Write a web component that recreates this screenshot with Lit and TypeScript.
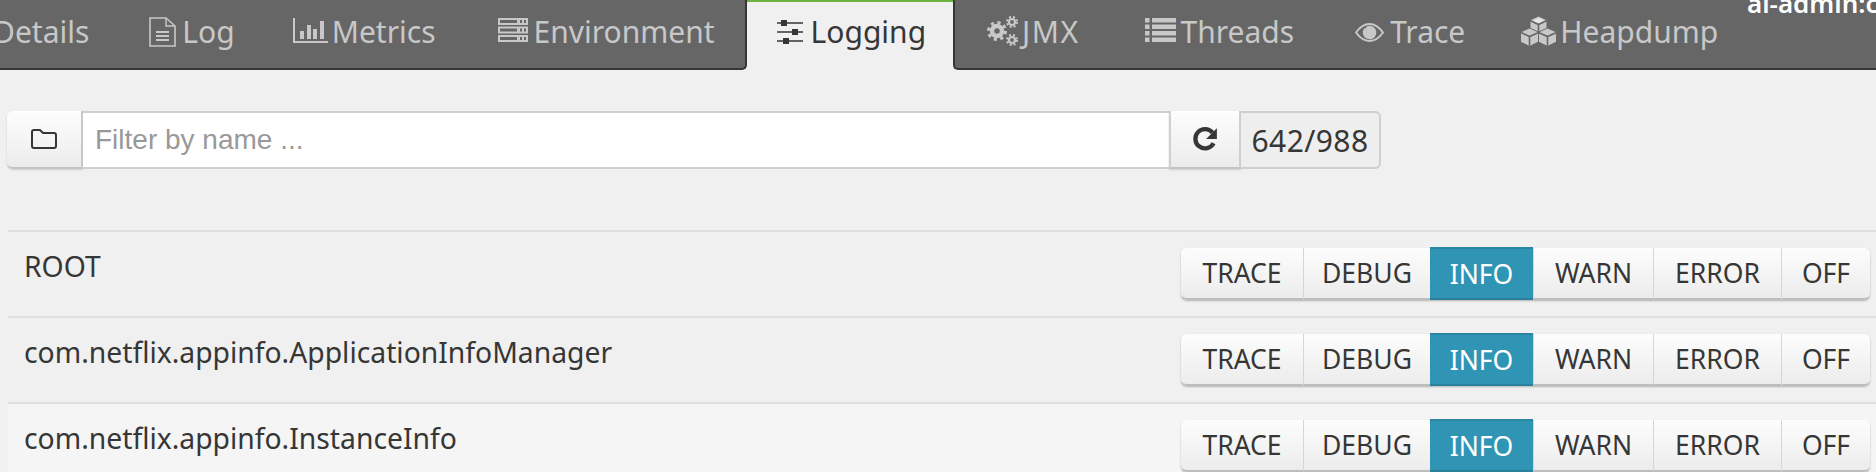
import { LitElement, css, html, svg } from "lit";
import { customElement, property } from "lit/decorators.js";
import { classMap } from "lit/directives/class-map.js";

const icons: Record<string, unknown> = {
  log: svg`<path d="M1 3h16l9 8v20H1z" fill="none" stroke="currentColor" stroke-width="1.6"/><path d="M17 3v8h9" fill="none" stroke="currentColor" stroke-width="1.4"/><path d="M7 17h13M7 21h13M7 25h13" stroke="currentColor" stroke-width="1.8"/>`,
  metrics: svg`<path d="M1 3v24h34" fill="none" stroke="currentColor" stroke-width="2"/><path d="M7 16h4v8H7zM14 10h4v14h-4zM20 14h4v10h-4zM27 6h4v18h-4z" fill="currentColor"/>`,
  env: svg`<path fill-rule="evenodd" fill="currentColor" d="M0 3h30v7H0zM22 5v3h2V5zM26 5v3h2V5zM2 5v3h17V5zM0 11.5h30v7H0zM22 13.5v3h2v-3zM26 13.5v3h2v-3zM2 13.5v3h17v-3zM0 20h30v7H0zM22 22v3h2v-3zM26 22v3h2v-3zM2 22v3h17v-3z"/>`,
  sliders: svg`<path d="M0 8h26M0 17h26M0 26h26" stroke="currentColor" stroke-width="1.6"/><path d="M4 5h6v6H4zM15 14h6v6h-6zM6 23h6v6H6z" fill="currentColor"/>`,
  jmx: svg`<g fill="none" stroke="currentColor"><circle cx="10" cy="16" r="5" stroke-width="4.5"/><circle cx="10" cy="16" r="8.5" stroke-width="3" stroke-dasharray="3.2 3.5"/><circle cx="25" cy="7" r="3" stroke-width="2.2"/><circle cx="25" cy="7" r="5" stroke-width="2" stroke-dasharray="2 2"/><circle cx="25" cy="25" r="3" stroke-width="2.2"/><circle cx="25" cy="25" r="5" stroke-width="2" stroke-dasharray="2 2"/></g>`,
  list: svg`<path fill="currentColor" d="M0 3h4.500v4.500H0zM7 3h24v4.500H7zM0 9.500h4.500V14H0zM7 9.500h24V14H7zM0 16h4.500v4.500H0zM7 16h24v4.500H7zM0 22.500h4.500V27H0zM7 22.500h24V27H7z"/>`,
  eye: svg`<path d="M1 17.500c4-5.500 8.500-8.500 13.500-8.500S24 12 28 17.500C24 23 19.500 26 14.500 26S5 23 1 17.500z" fill="none" stroke="currentColor" stroke-width="2"/><path d="M9.500 13a6.800 6.800 0 1 0 5-2.300c-2 0-3.500.8-3.500 2.500 0 1.300 1 2.300 2.300 2.300.9 0 1.700-.5 2-1.200z" fill="currentColor"/>`,
  cubes: svg`<g fill="currentColor" stroke="#666" stroke-width="1"><path d="M18.500 1l8.500 4v10l-8.500 4-8.500-4V5z"/><path d="M9.500 13l9 4v10l-9 4.500L.5 27V17z"/><path d="M27.500 13l9 4v10l-9 4.500-9-4.500V17z"/></g><path d="M10 5.500l8.500 4 8.500-4M18.500 9.500V17M1 17.500l8.500 4 9-4M9.500 21.500V31M18.500 17.500l9 4 9-4M27.500 21.500V31" fill="none" stroke="#666" stroke-width="1.6"/><path d="M13 5.500l5.500-2.500 5.500 2.500-5.500 2.500z" fill="#e6e6e6"/>`,
};

const tabs = [
  { label: "Details", icon: "", w: 0, gap: 0, nudge: 0, spacing: 0 },
  { label: "Log", icon: "log", w: 27, gap: 6, nudge: 0, spacing: 0 },
  { label: "Metrics", icon: "metrics", w: 35, gap: 4, nudge: -2, spacing: 0 },
  { label: "Environment", icon: "env", w: 30, gap: 6, nudge: 2, spacing: 0 },
  { label: "Logging", icon: "sliders", w: 26, gap: 8, nudge: 0, spacing: 0 },
  { label: "JMX", icon: "jmx", w: 32, gap: 3, nudge: 2, spacing: 1.5 },
  { label: "Threads", icon: "list", w: 31, gap: 5, nudge: 5, spacing: 0 },
  { label: "Trace", icon: "eye", w: 29, gap: 6, nudge: 1, spacing: 0 },
  { label: "Heapdump", icon: "cubes", w: 37, gap: 3, nudge: -5, spacing: 0 },
];

const levels = ["TRACE", "DEBUG", "INFO", "WARN", "ERROR", "OFF"];
const loggers = ["ROOT", "com.netflix.appinfo.ApplicationInfoManager", "com.netflix.appinfo.InstanceInfo"];

@customElement("logger-row")
export class LoggerRow extends LitElement {
  @property() name = "";
  @property({ type: Boolean }) striped = false;

  static styles = css`
    :host {
      display: block;
    }
    .row {
      display: flex;
      justify-content: space-between;
      height: 84px;
      border-top: 2px solid #dfdfdf;
      padding: 0 6px 0 16px;
    }
    .row.striped {
      background: #f5f5f5;
    }
    .name {
      font-size: 28.300px;
      line-height: 36px;
      padding-top: 16px;
      color: #363636;
    }
    .levels {
      display: grid;
      grid-template-columns: 122px 127px 103px 120px 128px 89px;
      height: 52px;
      margin-top: 16px;
      border-radius: 6px;
      box-shadow: 0 1px 2px rgba(0, 0, 0, 0.25);
    }
    .level {
      display: flex;
      align-items: center;
      justify-content: center;
      font-size: 26.500px;
      color: #363636;
      background: linear-gradient(#fdfdfd, #ececec);
      border-left: 1px solid #d6d6d6;
      border-bottom: 2px solid #bdbdbd;
    }
    .level:first-child {
      border-left: 0;
      border-radius: 6px 0 0 6px;
    }
    .level:last-child {
      border-radius: 0 6px 6px 0;
    }
    .level.on {
      color: #fff;
      background: #3095b4;
      border-left: 0;
      border-bottom: 2px solid #29819c;
      border-top: 2px solid #2b86a2;
      margin-top: -1px;
    }
  `;

  render() {
    return html`<div class=${classMap({ row: true, striped: this.striped })}>
      <div class="name">${this.name}</div>
      <div class="levels">
        ${levels.map((l) => html`<div class=${classMap({ level: true, on: l === "INFO" })}>${l}</div>`)}
      </div>
    </div>`;
  }
}

@customElement("app-root")
export class AppRoot extends LitElement {
  static styles = css`
    :host {
      display: block;
      position: relative;
      height: 472px;
      overflow: hidden;
      background: #f0f0f0;
      font-family: "Noto Sans", "Open Sans", sans-serif;
      color: #363636;
    }
    nav {
      display: flex;
      height: 70px;
      margin-left: -37px;
    }
    .tab {
      display: flex;
      align-items: center;
      box-sizing: border-box;
      padding: 0 30px 6px;
      height: 70px;
      background: #666;
      color: #c8c8c8;
      font-size: 30px;
      border-bottom: 2px solid #363636;
    }
    .tab:last-child {
      flex: 1;
    }
    .tab svg {
      flex: none;
      height: 32px;
    }
    .tab.before {
      border-right: 2px solid #363636;
      border-bottom-right-radius: 5px;
    }
    .tab.after {
      border-left: 2px solid #363636;
      border-bottom-left-radius: 5px;
    }
    .tab.active {
      background: #f0f0f0;
      color: #363636;
      border-top: 2px solid #6cb33f;
      border-bottom: 0;
      padding-right: 27px;
      padding-bottom: 10px;
    }
    .brand {
      position: absolute;
      top: -15px;
      left: 1747px;
      color: #fff;
      font-size: 26px;
      font-weight: 600;
      line-height: 36px;
      white-space: nowrap;
    }
    .toolbar {
      display: flex;
      width: 1374px;
      height: 58px;
      margin: 41px 0 61px 7px;
    }
    .toolbar button {
      display: flex;
      align-items: center;
      justify-content: center;
      padding: 0;
      color: #363636;
      background: linear-gradient(#fdfdfd, #ececec);
      border: 0;
      border-bottom: 2px solid #c4c4c4;
      box-shadow: 0 1px 2px rgba(0, 0, 0, 0.15);
    }
    .folder {
      width: 76px;
      border-radius: 6px 0 0 6px;
      border-right: 2px solid #c8c8c8 !important;
    }
    input {
      flex: 1;
      min-width: 0;
      box-sizing: border-box;
      padding: 0 12px;
      background: #fff;
      border: 2px solid #cfcfcf;
      border-left: 0;
      border-right: 0;
      font-family: "Liberation Sans", Arial, sans-serif;
      font-size: 28px;
      outline: none;
    }
    input::placeholder {
      color: #999;
    }
    .refresh {
      width: 72px;
      border-left: 2px solid #cfcfcf !important;
      border-right: 2px solid #cfcfcf !important;
    }
    .count {
      display: flex;
      align-items: center;
      justify-content: center;
      width: 140px;
      box-sizing: border-box;
      font-size: 30px;
      letter-spacing: 0.4px;
      background: #eee;
      border: 2px solid #cfcfcf;
      border-left: 0;
      border-radius: 0 6px 6px 0;
    }
    logger-row {
      margin-left: 8px;
    }
  `;

  render() {
    const activeAt = tabs.findIndex((t) => t.label === "Logging");
    return html`
      <nav>
        ${tabs.map(
          (t, i) => html`<div
            class=${classMap({
              tab: true,
              active: i === activeAt,
              before: i === activeAt - 1,
              after: i === activeAt + 1,
            })}
          >
            ${t.w
              ? html`<svg
                  viewBox="0 0 ${t.w} 32"
                  width=${t.w}
                  style="margin-left:${t.nudge}px;margin-right:${t.gap}px"
                >${icons[t.icon]}</svg>`
              : ""}<span style="letter-spacing:${t.spacing}px">${t.label}</span>
          </div>`
        )}
      </nav>
      <div class="brand">al-admin:c</div>
      <div class="toolbar">
        <button class="folder" aria-label="Folder">
          <svg width="26" height="22" viewBox="0 0 26 22" fill="none" stroke="currentColor" stroke-width="2">
            <path d="M1 4a2 2 0 0 1 2-2h6l3 3h11a2 2 0 0 1 2 2v11a2 2 0 0 1-2 2H3a2 2 0 0 1-2-2z" />
          </svg>
        </button>
        <input placeholder="Filter by name ..." />
        <button class="refresh" aria-label="Refresh">
          <svg width="28" height="28" viewBox="0 0 26 26" fill="none">
            <path d="M21 17a9 9 0 1 1-1-10" stroke="currentColor" stroke-width="4" />
            <path d="M24 3v10H14z" fill="currentColor" />
          </svg>
        </button>
        <div class="count">642/988</div>
      </div>
      ${loggers.map((n, i) => html`<logger-row .name=${n} ?striped=${i === 2}></logger-row>`)}
    `;
  }
}
